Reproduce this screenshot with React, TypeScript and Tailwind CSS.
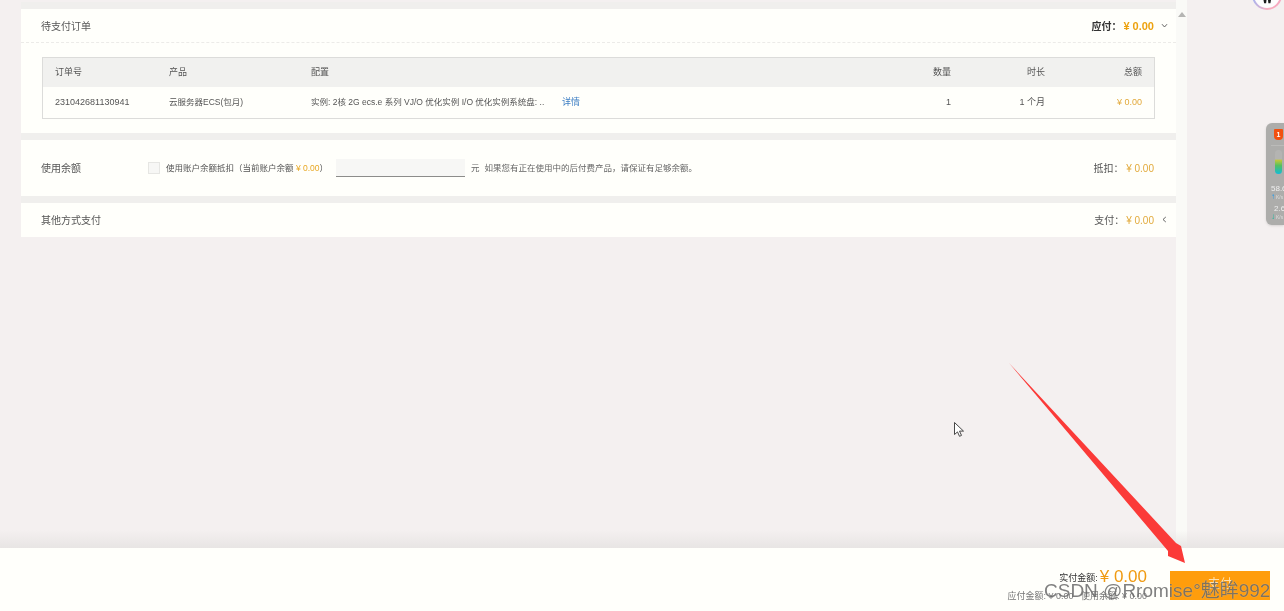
const cjk = "font-['Liberation_Sans','Noto_Sans_CJK_SC',sans-serif]";

function OrderTable() {
  const cols = 'grid grid-cols-[114px_142px_1fr_94px_94px_97px] items-center pl-[12px] pr-[12px]';
  return (
    <div className="mx-[21px] mt-[14px] border border-[#dcdcda] text-[9px] text-[#555]">
      <div className={`${cols} h-[29px] bg-[#f1f1ef]`}>
        <span>订单号</span>
        <span>产品</span>
        <span>配置</span>
        <span className="text-right">数量</span>
        <span className="text-right">时长</span>
        <span className="text-right">总额</span>
      </div>
      <div className={`${cols} h-[31px]`}>
        <span>231042681130941</span>
        <span className="text-[8.5px]">云服务器ECS(包月)</span>
        <span className="flex items-center">
          <span className="w-[251px] truncate text-[8.5px]">实例: 2核 2G ecs.e 系列 VJ/O 优化实例 I/O 优化实例系统盘: ..</span>
          <span className="text-[#3f7fc4]">详情</span>
        </span>
        <span className="text-right">1</span>
        <span className="text-right">1 个月</span>
        <span className="text-right text-[#e2a93a]">¥ 0.00</span>
      </div>
    </div>
  );
}

function Chevron({ left }: { left?: boolean }) {
  return (
    <svg width="7" height="7" viewBox="0 0 7 7" fill="none" stroke="#555" strokeWidth="0.9" className="ml-[7px] -mt-[2px]">
      {left ? <path d="M4.8 1 2 3.5l2.8 2.5" /> : <path d="M1 2.2 3.5 5 6 2.2" />}
    </svg>
  );
}

function Widget() {
  return (
    <div className="absolute left-[1266px] top-[123px] flex h-[102px] w-[18px] flex-col overflow-hidden rounded-l-[6px] bg-[#adadab] pl-[5px] shadow-sm">
      <div className="flex h-[23px] items-center border-b border-[#bbbbb9] pl-[3px]">
        <span className="flex h-[11px] w-[9px] items-center justify-center rounded-b-[4px] rounded-t-[1px] bg-[#f2500f] text-[7px] font-bold leading-none text-white">1</span>
      </div>
      <div className="ml-[4px] mt-[4px] h-[24px] w-[7px] rounded-full bg-[linear-gradient(to_bottom,#b4b4b2_0%,#b4b4b2_38%,#c4c83a_42%,#55c060_65%,#10bcd8_100%)]" />
      <div className="mt-[10px] whitespace-nowrap text-[8px] leading-[9px] text-[#eee]">58.6</div>
      <div className="flex items-center text-[5px] leading-[8px] text-[#ddd]">
        <span className="mr-[1px] text-[8px] font-bold leading-[8px] text-[#1e9bf0]">↑</span>K/s
      </div>
      <div className="mt-[3px] whitespace-nowrap pl-[3px] text-[8px] leading-[9px] text-[#eee]">2.6</div>
      <div className="flex items-center text-[5px] leading-[8px] text-[#ddd]">
        <span className="mr-[1px] text-[8px] font-bold leading-[8px] text-[#12b8a0]">↓</span>K/s
      </div>
    </div>
  );
}

export default function App() {
  return (
    <div className={`${cjk} relative flex h-[611px] w-[1284px] flex-col overflow-hidden bg-[#f4f0f0] text-[#444] blur-[0.35px]`}>
      <div className="relative flex min-h-0 flex-1 pl-[21px] pt-[2px]">
        <div className="w-[1155px]">
          <div className="bg-[#f0efed] pt-[7px]">
            <section className="h-[124px] bg-[#fffffb]">
              <header className="flex h-[34px] items-center justify-between border-b border-dashed border-[#ecebe8] pl-[20px] pr-[8px] pt-[1px]">
                <span className="text-[10px] text-[#555]">待支付订单</span>
                <span className="flex items-center text-[10px] font-bold text-[#333]">
                  应付：<span className="ml-[2px] text-[11px] font-bold text-[#eda20f]">¥ 0.00</span>
                  <Chevron />
                </span>
              </header>
              <OrderTable />
            </section>
            <section className="mt-[7px] flex h-[56px] items-center bg-[#fffffb] pl-[20px] pr-[22px] text-[8.5px] text-[#666]">
              <span className="w-[107px] text-[10px] text-[#555]">使用余额</span>
              <span className="mr-[6px] h-[12px] w-[12px] border border-[#e6e6e3] bg-[#f7f7f5]" />
              <span className="w-[170px] whitespace-nowrap text-[#555]">
                使用账户余额抵扣（当前账户余额 <span className="text-[#e8a825]">¥ 0.00</span>）
              </span>
              <span className="h-[18px] w-[129px] border-b border-[#8c8c8a] bg-[#f7f7f5]" />
              <span className="ml-[6px]">元</span>
              <span className="ml-[5px]">如果您有正在使用中的后付费产品，请保证有足够余额。</span>
              <span className="ml-auto text-[10px] text-[#555]">
                抵扣： <span className="text-[#e2aa3c]">¥ 0.00</span>
              </span>
            </section>
            <section className="mt-[7px] flex h-[34px] items-center justify-between bg-[#fffffb] pl-[20px] pr-[8px] pt-[1px]">
              <span className="text-[10px] text-[#555]">其他方式支付</span>
              <span className="flex items-center text-[10px] text-[#555]">
                支付： <span className="ml-[2px] text-[#e2aa3c]">¥ 0.00</span>
                <Chevron left />
              </span>
            </section>
          </div>
        </div>
        <div className="-mt-[2px] flex w-[11px] justify-center bg-[#fafaf7] pt-[12px]">
          <span className="h-0 w-0 border-x-[4px] border-b-[5px] border-x-transparent border-b-[#b5b5b3]" />
        </div>
        <div className="pointer-events-none absolute inset-x-0 bottom-0 h-[18px] bg-gradient-to-b from-transparent to-[#e8e5e4]" />
      </div>

      <footer className="relative flex h-[63px] shrink-0 items-start justify-end bg-[#fffffb] pr-[14px] pt-[19px]">
        <div className="mr-[23px] flex flex-col items-end">
          <div className="flex h-[20px] items-center text-[9px] text-[#333]">
            <span className="mt-[3px]">实付金额:</span>
            <span className="-mt-[2px] ml-[2px] text-[17px] leading-none text-[#f09a10]">¥ 0.00</span>
          </div>
          <div className="mt-[4px] whitespace-nowrap text-[9px] leading-[10px] text-[#777]">应付金额: ¥ 0.00 &nbsp;&nbsp;使用余额: ¥ 0.00</div>
        </div>
        <button className="mt-[4px] h-[29px] w-[100px] bg-[#ff9d0c] pb-[4px] text-[12px] text-[#ffe0ad]">支付</button>
      </footer>

      {/* 右上角头像 */}
      <svg className="absolute left-[1250px] top-0" width="34" height="12" viewBox="0 0 34 12">
        <defs>
          <linearGradient id="ring" x1="0" y1="0" x2="1" y2="0">
            <stop offset="0" stopColor="#aab4ee" />
            <stop offset="0.5" stopColor="#f8aebf" />
            <stop offset="1" stopColor="#f6a9c0" />
          </linearGradient>
        </defs>
        <circle cx="17" cy="-5" r="14" fill="#fdfdfd" stroke="url(#ring)" strokeWidth="2" />
        <path d="M13.5 0h3l-.4 3.2h-2zM18 0h3l-.6 3.2h-2z" fill="#1c1c1c" />
      </svg>

      <Widget />

      {/* 红色箭头 */}
      <svg className="pointer-events-none absolute left-[1000px] top-[355px]" width="200" height="215" viewBox="0 0 200 215">
        <path d="M9 8 176 188 181 191 185 208 168 201 168 196Z" fill="#fb3a38" />
      </svg>

      {/* 鼠标指针 */}
      <svg className="absolute left-[953px] top-[421px]" width="12" height="17" viewBox="0 0 12 17">
        <path d="M1.5 1.5v12l3-2.6 2 4.4 2-.9-2-4.3h4z" fill="#fff" stroke="#333" strokeWidth="0.9" />
      </svg>

      {/* 水印 */}
      <div className="absolute left-[1044px] top-[577px] whitespace-nowrap text-[19px] leading-[28px] text-[#555]/75 [text-shadow:0_0_1px_rgba(255,255,255,0.5)]">
        CSDN @Rromise°魅眸992
      </div>
    </div>
  );
}
